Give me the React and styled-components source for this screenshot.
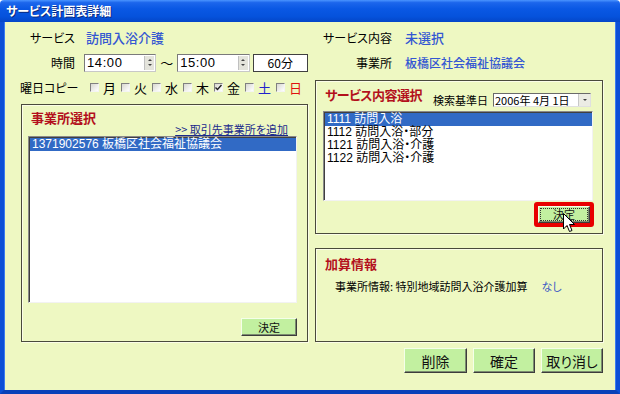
import styled, { createGlobalStyle } from "styled-components";

const Global = createGlobalStyle`
  html, body {
    margin: 0;
    padding: 0;
    background: #ffffff;
  }
  body {
    font-family: "Noto Sans CJK JP", "Liberation Sans", sans-serif;
    font-feature-settings: "palt";
    color: #000;
  }
`;

const Window = styled.div`
  width: 620px;
  height: 394px;
  display: flex;
  flex-direction: column;
  overflow: hidden;
  position: relative;
`;

const TitleBar = styled.div`
  height: 22px;
  flex-shrink: 0;
  display: flex;
  align-items: center;
  padding-left: 6px;
  background: linear-gradient(
    to bottom,
    #4a94ff 0%,
    #1c66ec 12%,
    #0a58e4 40%,
    #0552dc 75%,
    #0446c8 100%
  );
  color: #fff;
  font-size: 12px;
  font-weight: bold;
  line-height: 22px;
  text-shadow: 1px 1px 0 #0a2a80;
  border-radius: 4px 4px 0 0;
`;

const Client = styled.div`
  flex: 1;
  display: grid;
  grid-template-columns: 287px 288px;
  column-gap: 7px;
  align-content: start;
  padding: 3px 13px 0 17px;
  background: #eef8c2;
  border-left: 4px solid #0b4fd6;
  border-right: 4px solid #0b4fd6;
  border-bottom: 4px solid #0840b8;
  box-shadow: inset 1px 0 0 #3a7cf0, inset -1px 0 0 #3a7cf0;
`;

const Column = styled.div`
  display: flex;
  flex-direction: column;
`;

const Row = styled.div`
  height: 25px;
  display: flex;
  align-items: center;
  margin-left: ${(p) => p.$ml || 0}px;
`;

const Label = styled.div`
  width: ${(p) => p.$w}px;
  flex-shrink: 0;
  text-align: right;
  font-size: 12px;
  line-height: 14px;
  white-space: nowrap;
`;

const Value = styled.div`
  margin-left: ${(p) => p.$ml}px;
  font-size: ${(p) => p.$size || 13}px;
  line-height: 16px;
  color: #3457d2;
  font-weight: 500;
  white-space: nowrap;
`;

const TimeBox = styled.div`
  width: 73px;
  height: 18px;
  box-sizing: border-box;
  margin-left: ${(p) => p.$ml || 0}px;
  background: #fff;
  border: 1px solid #7a7a7a;
  border-right-color: #c8c8c8;
  border-bottom-color: #c8c8c8;
  display: flex;
  align-items: center;
  font-family: "Liberation Sans", sans-serif;
  font-size: 13px;
  padding-left: 2px;
`;

const TimeText = styled.span`
  flex: 1;
  letter-spacing: 0.6px;
`;

const Spin = styled.div`
  width: 10px;
  height: 14px;
  margin-right: 1px;
  background: #e4e4dc;
  border-left: 1px solid #c0c0c0;
  display: flex;
  flex-direction: column;
  align-items: center;
  justify-content: space-around;
  padding: 2px 0;
  box-sizing: border-box;
`;

const Tri = styled.div`
  width: 0;
  height: 0;
  border-left: 2px solid transparent;
  border-right: 2px solid transparent;
  ${(p) =>
    p.$down
      ? "border-top: 2px solid #444;"
      : "border-bottom: 2px solid #444;"}
`;

const Tilde = styled.span`
  width: 21px;
  text-align: center;
  font-size: 13px;
`;

const Duration = styled.div`
  width: 56px;
  height: 18px;
  box-sizing: border-box;
  margin-left: 3px;
  background: #fff;
  border: 1px solid #404040;
  display: flex;
  align-items: center;
  justify-content: center;
  font-size: 12px;
`;

const CheckRow = styled.div`
  display: flex;
  align-items: center;
  margin-left: 15px;
`;

const CheckItem = styled.label`
  display: flex;
  align-items: center;
  gap: 4px;
  margin-right: 5px;
  font-size: 13px;
  line-height: 14px;
  color: ${(p) => p.$color || "#000"};
`;

const Box = styled.span`
  width: 9px;
  height: 9px;
  flex-shrink: 0;
  box-sizing: border-box;
  border: 1px solid;
  border-color: #808080 #f4f4f4 #f4f4f4 #808080;
  background: linear-gradient(135deg, #d8d8d0, #ffffff);
  display: flex;
  align-items: center;
  justify-content: center;
`;

const Panel = styled.div`
  margin-top: ${(p) => p.$mt}px;
  height: ${(p) => p.$h}px;
  box-sizing: border-box;
  border: 1px solid #4a4a3c;
  box-shadow: 1px 1px 0 #fbfde8, inset 1px 1px 0 #fbfde8;
  display: flex;
  flex-direction: column;
  padding: ${(p) => p.$pad};
`;

const PanelHead = styled.div`
  height: ${(p) => p.$h}px;
  display: flex;
  justify-content: space-between;
  align-items: flex-start;
  flex-shrink: 0;
`;

const Heading = styled.div`
  margin-top: ${(p) => p.$mt}px;
  margin-left: ${(p) => p.$ml}px;
  font-size: 13px;
  line-height: 16px;
  font-weight: bold;
  color: #b3101c;
  white-space: nowrap;
  letter-spacing: ${(p) => p.$ls || 0}px;
`;

const AddLink = styled.a`
  align-self: flex-end;
  font-size: 11px;
  line-height: 13px;
  color: #1a2a8c;
  text-decoration: underline;
  margin-right: 9px;
  white-space: nowrap;
  cursor: pointer;
`;

const ListBox = styled.div`
  height: ${(p) => p.$h}px;
  flex-shrink: 0;
  box-sizing: border-box;
  background: #fff;
  border: 1px solid;
  border-color: #8a8a8a #f2f2f2 #f2f2f2 #8a8a8a;
  box-shadow: inset 1px 1px 0 #404040;
  padding: 1px 0 0 1px;
`;

const ListItem = styled.div`
  height: 13px;
  line-height: 13px;
  padding-left: 2px;
  font-family: "Liberation Sans", "Noto Sans CJK JP", sans-serif;
  font-size: 12px;
  white-space: nowrap;
  color: ${(p) => (p.$sel ? "#fff" : "#000")};
  background: ${(p) => (p.$sel ? "#316ac5" : "transparent")};
`;

const Footer = styled.div`
  display: flex;
  justify-content: flex-end;
  margin-top: ${(p) => p.$mt}px;
  margin-right: ${(p) => p.$mr || 0}px;
`;

const GreenButton = styled.button`
  width: ${(p) => p.$w}px;
  height: ${(p) => p.$h}px;
  box-sizing: border-box;
  padding: 0;
  font-family: "Noto Sans CJK JP", sans-serif;
  font-feature-settings: "palt";
  font-size: ${(p) => p.$fs}px;
  line-height: 1;
  color: #111;
  background: #c2f0a0;
  border: 1px solid;
  border-color: #f4ffe8 #3c3c3c #3c3c3c #f4ffe8;
  box-shadow: inset -1px -1px 0 #7c8c70;
`;

const FocusWrap = styled.div`
  position: relative;
  width: 60px;
  height: 25px;
  box-sizing: border-box;
  border: 3px solid #e80000;
  border-radius: 3px;
  display: flex;
  align-items: center;
  justify-content: center;
  background: #e80000;
`;

const FocusButton = styled(GreenButton)`
  outline: 1px dotted #333;
  outline-offset: -3px;
`;

const Cursor = styled.svg`
  position: absolute;
  left: 26px;
  top: 8px;
`;

const SearchGroup = styled.div`
  display: flex;
  align-items: center;
  margin-top: 12px;
  margin-right: 2px;
`;

const SearchLabel = styled.span`
  font-size: 11px;
  line-height: 14px;
  margin-right: 5px;
`;

const Combo = styled.div`
  width: 98px;
  height: 14px;
  box-sizing: border-box;
  background: #fff;
  border: 1px solid;
  border-color: #6a6a6a #e0e0e0 #e0e0e0 #6a6a6a;
  display: flex;
  align-items: center;
  font-size: 11px;
  padding-left: 1px;
`;

const ComboText = styled.span`
  flex: 1;
  white-space: nowrap;
  line-height: 12px;
`;

const ComboBtn = styled.div`
  width: 11px;
  height: 12px;
  background: #ecece4;
  border-left: 1px solid #c8c8c8;
  display: flex;
  align-items: center;
  justify-content: center;
`;

const InfoLine = styled.div`
  display: flex;
  margin-top: 7px;
  margin-left: 10px;
  font-size: 11px;
  line-height: 14px;
  white-space: nowrap;
`;

const InfoValue = styled.span`
  margin-left: 14px;
  color: #3c58c4;
`;

const ActionRow = styled.div`
  display: flex;
  justify-content: flex-end;
  gap: 6px;
  margin-top: 6px;
`;

const days = [
  { d: "月" },
  { d: "火" },
  { d: "水" },
  { d: "木" },
  { d: "金", checked: true },
  { d: "土", color: "#2222cc" },
  { d: "日", color: "#e01010" },
];

const services = [
  "1111 訪問入浴",
  "1112 訪問入浴・部分",
  "1121 訪問入浴・介護",
  "1122 訪問入浴・介護",
];

const Spinner = () => (
  <Spin>
    <Tri />
    <Tri $down />
  </Spin>
);

export default function App() {
  return (
    <>
      <Global />
      <Window>
        <TitleBar>サービス計画表詳細</TitleBar>
        <Client>
          <Column>
            <Row>
              <Label $w={54}>サービス</Label>
              <Value $ml={11}>訪問入浴介護</Value>
            </Row>
            <Row>
              <Label $w={54}>時間</Label>
              <TimeBox $ml={9}>
                <TimeText>14:00</TimeText>
                <Spinner />
              </TimeBox>
              <Tilde>～</Tilde>
              <TimeBox>
                <TimeText>15:00</TimeText>
                <Spinner />
              </TimeBox>
              <Duration>60分</Duration>
            </Row>
            <Row $ml={-1}>
              <Label $w={55}>曜日コピー</Label>
              <CheckRow>
                {days.map((day) => (
                  <CheckItem key={day.d} $color={day.color}>
                    <Box>
                      {day.checked && (
                        <svg width="7" height="7" viewBox="0 0 7 7">
                          <path
                            d="M0.5 3.5 L2.5 5.5 L6.5 1"
                            stroke="#222"
                            strokeWidth="1.4"
                            fill="none"
                          />
                        </svg>
                      )}
                    </Box>
                    {day.d}
                  </CheckItem>
                ))}
              </CheckRow>
            </Row>
            <Panel $mt={4} $h={238} $pad="0 10px 0 6px">
              <PanelHead $h={31}>
                <Heading $mt={5} $ml={3}>
                  事業所選択
                </Heading>
                <AddLink>&gt;&gt; 取引先事業所を追加</AddLink>
              </PanelHead>
              <ListBox $h={167}>
                <ListItem $sel>1371902576 板橋区社会福祉協議会</ListItem>
              </ListBox>
              <Footer $mt={15}>
                <GreenButton $w={56} $h={18} $fs={11}>
                  決定
                </GreenButton>
              </Footer>
            </Panel>
          </Column>

          <Column>
            <Row>
              <Label $w={77}>サービス内容</Label>
              <Value $ml={13}>未選択</Value>
            </Row>
            <Row>
              <Label $w={77}>事業所</Label>
              <Value $ml={13} $size={12}>
                板橋区社会福祉協議会
              </Value>
            </Row>
            <Panel $mt={5} $h={154} $pad="0 9px 0 7px">
              <PanelHead $h={30}>
                <Heading $mt={6} $ml={2} $ls={-0.5}>
                  サービス内容選択
                </Heading>
                <SearchGroup>
                  <SearchLabel>検索基準日</SearchLabel>
                  <Combo>
                    <ComboText>2006年 4月 1日</ComboText>
                    <ComboBtn>
                      <Tri $down />
                    </ComboBtn>
                  </Combo>
                </SearchGroup>
              </PanelHead>
              <ListBox $h={90}>
                {services.map((s, i) => (
                  <ListItem key={i} $sel={i === 0}>
                    {s}
                  </ListItem>
                ))}
              </ListBox>
              <Footer $mt={1} $mr={-1}>
                <FocusWrap>
                  <FocusButton $w={52} $h={17} $fs={11}>
                    決定
                  </FocusButton>
                  <Cursor width="13" height="20" viewBox="0 0 13 20">
                    <path
                      d="M0.5 0.5 L0.5 16 L4 12.5 L6.5 18.5 L9 17.5 L6.5 11.5 L11.5 11.5 Z"
                      fill="#fff"
                      stroke="#000"
                      strokeWidth="1"
                    />
                  </Cursor>
                </FocusWrap>
              </Footer>
            </Panel>
            <Panel $mt={14} $h={94} $pad="0 9px">
              <Heading $mt={7} $ml={0}>
                加算情報
              </Heading>
              <InfoLine>
                事業所情報: 特別地域訪問入浴介護加算
                <InfoValue>なし</InfoValue>
              </InfoLine>
            </Panel>
            <ActionRow>
              <GreenButton $w={63} $h={25} $fs={14}>
                削除
              </GreenButton>
              <GreenButton $w={62} $h={25} $fs={14}>
                確定
              </GreenButton>
              <GreenButton $w={62} $h={25} $fs={14}>
                取り消し
              </GreenButton>
            </ActionRow>
          </Column>
        </Client>
      </Window>
    </>
  );
}
